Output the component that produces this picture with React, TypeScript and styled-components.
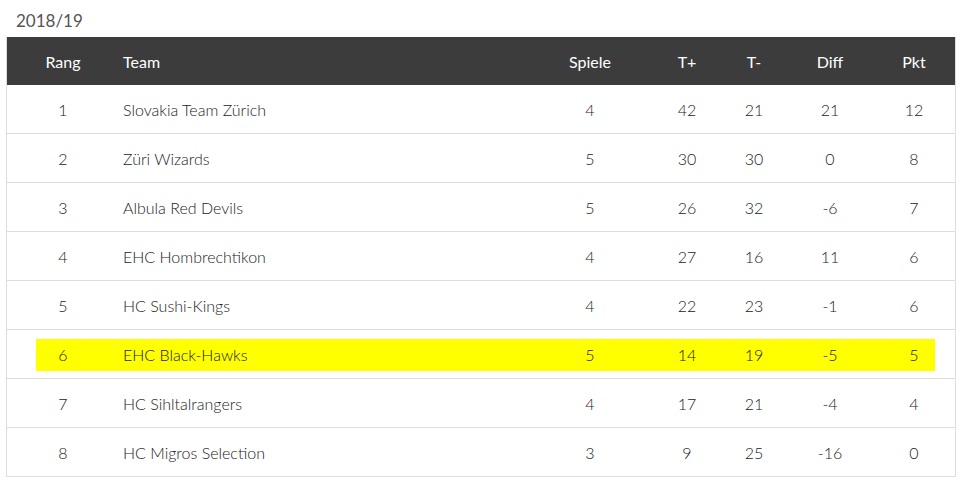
import styled, { createGlobalStyle } from 'styled-components';

const GlobalStyle = createGlobalStyle`
  body {
    margin: 0;
    background: #fff;
    font-family: Lato, 'Open Sans', sans-serif;
    color: #444;
  }
`;

const standings = [
  { rank: 1, team: 'Slovakia Team Zürich', games: 4, plus: 42, minus: 21, diff: 21, pts: 12 },
  { rank: 2, team: 'Züri Wizards', games: 5, plus: 30, minus: 30, diff: 0, pts: 8 },
  { rank: 3, team: 'Albula Red Devils', games: 5, plus: 26, minus: 32, diff: -6, pts: 7 },
  { rank: 4, team: 'EHC Hombrechtikon', games: 4, plus: 27, minus: 16, diff: 11, pts: 6 },
  { rank: 5, team: 'HC Sushi-Kings', games: 4, plus: 22, minus: 23, diff: -1, pts: 6 },
  { rank: 6, team: 'EHC Black-Hawks', games: 5, plus: 14, minus: 19, diff: -5, pts: 5, own: true },
  { rank: 7, team: 'HC Sihltalrangers', games: 4, plus: 17, minus: 21, diff: -4, pts: 4 },
  { rank: 8, team: 'HC Migros Selection', games: 3, plus: 9, minus: 25, diff: -16, pts: 0 },
];

const App = () => {
  return (
    <Page>
      <GlobalStyle />
      <Season>2018/19</Season>
      <Table>
        <HeadRow>
          <Cell>Rang</Cell>
          <Cell left>Team</Cell>
          <Cell>Spiele</Cell>
          <Cell>T+</Cell>
          <Cell>T-</Cell>
          <Cell>Diff</Cell>
          <Cell>Pkt</Cell>
        </HeadRow>
        {standings.map(row => (
          <Row key={row.rank} highlight={!!row.own}>
            <Cell>{row.rank}</Cell>
            <Cell left>{row.team}</Cell>
            <Cell>{row.games}</Cell>
            <Cell>{row.plus}</Cell>
            <Cell>{row.minus}</Cell>
            <Cell>{row.diff}</Cell>
            <Cell>{row.pts}</Cell>
          </Row>
        ))}
      </Table>
    </Page>
  );
};

const Page = styled.div`
  width: 948px;
  padding: 0 7px;
`;

const Season = styled.div`
  padding: 9px 0 0 9px;
  height: 28px;
  font-size: 17px;
  line-height: 24px;
  color: #555;
`;

const columns = '112px 408px 126px 68px 66px 86px 82px';

const Table = styled.div`
  border-left: 1px solid #ddd;
  border-right: 1px solid #ddd;
  margin-left: -1px;
  width: 948px;
`;

const HeadRow = styled.div`
  display: grid;
  grid-template-columns: ${columns};
  height: 48px;
  align-items: center;
  background: #3c3c3c;
  color: #fff;
  font-size: 16px;
`;

const Row = styled.div<{ highlight: boolean }>`
  position: relative;
  display: grid;
  grid-template-columns: ${columns};
  height: 48px;
  align-items: center;
  border-bottom: 1px solid #ddd;
  font-size: 16px;
  font-weight: 300;
  color: #222;

  &::before {
    content: '';
    display: ${props => (props.highlight ? 'block' : 'none')};
    position: absolute;
    top: 9px;
    bottom: 7px;
    left: 29px;
    right: 20px;
    background: #ffff00;
  }
`;

const Cell = styled.div<{ left?: boolean }>`
  position: relative;
  text-align: ${props => (props.left ? 'left' : 'center')};
  padding-left: ${props => (props.left ? '4px' : '0')};
  white-space: nowrap;
`;

export default App;
